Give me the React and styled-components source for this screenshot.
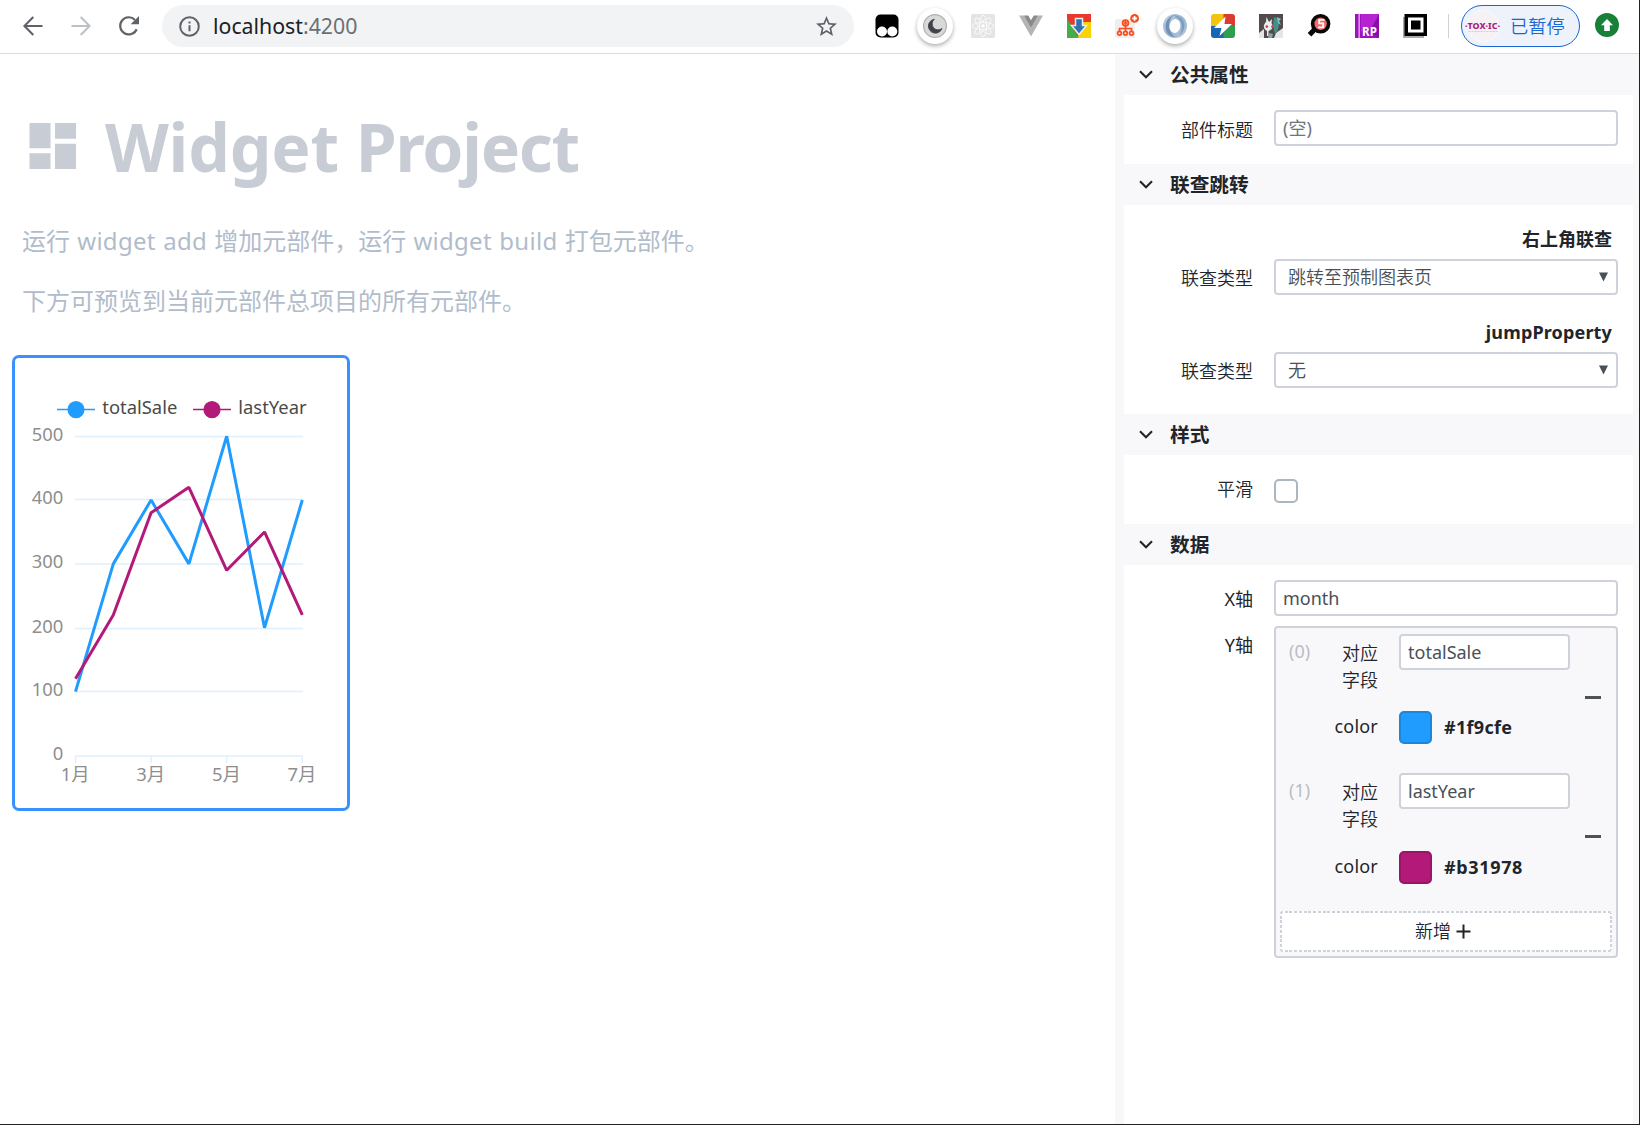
import React from "react";
import styled, { createGlobalStyle } from "styled-components";

const GlobalStyle = createGlobalStyle`
  * { box-sizing: border-box; }
  html, body { margin: 0; padding: 0; background: #fff; }
  body {
    font-family: "Noto Sans", "Noto Sans CJK SC", sans-serif;
    font-size: 18px;
    line-height: 27px;
    color: #212529;
    overflow: hidden;
  }
`;

const Screen = styled.div`
  width: 1640px;
  height: 1125px;
  display: flex;
  flex-direction: column;
  border-right: 1px solid #202227;
  border-bottom: 1px solid #202227;
  overflow: hidden;
`;

/* ---------- browser bar ---------- */

const Toolbar = styled.header`
  flex: none;
  height: 54px;
  padding: 5px 0 6px 9px;
  display: flex;
  border-bottom: 1px solid #dadce0;
`;

const NavButton = styled.div`
  width: 48px;
  height: 41px;
  display: flex;
  align-items: center;
  justify-content: center;
  color: ${(p) => (p.$muted ? "#bdc1c6" : "#5f6368")};
`;

const AddressBar = styled.div`
  width: 692px;
  height: 42px;
  margin-left: 9px;
  padding: 0 16px 0 17px;
  border-radius: 21px;
  background: #f1f3f4;
  display: flex;
  align-items: center;
`;

const Url = styled.span`
  flex: 1;
  margin-left: 13px;
  padding-bottom: 2px;
  font-size: 21.3px;
  color: #202124;
`;

const Port = styled.span`
  color: #6b6f74;
`;

const Extensions = styled.div`
  display: flex;
  margin-left: 9px;
`;

const ExtSlot = styled.div`
  width: 48px;
  height: 42px;
  display: flex;
  align-items: center;
  justify-content: center;
`;

const RoundBadge = styled.div`
  width: 36px;
  height: 36px;
  border-radius: 50%;
  background: #fff;
  box-shadow: 0 2px 4px rgba(0, 0, 0, 0.32);
  display: flex;
  align-items: center;
  justify-content: center;
`;

const BarDivider = styled.div`
  width: 1px;
  height: 24px;
  margin: 9px 12px 0 9px;
  background: #cfd1d5;
`;

const ProfilePill = styled.div`
  width: 119px;
  height: 42px;
  padding: 0 3px;
  border: 1.5px solid #1967d2;
  border-radius: 21px;
  background: #edf2fb;
  color: #1967d2;
  display: flex;
  align-items: center;
`;

const ProfileState = styled.span`
  margin-left: 9px;
  padding-bottom: 1px;
  font-family: "Noto Sans CJK SC", sans-serif;
  font-weight: 350;
  font-size: 18.2px;
  white-space: nowrap;
`;

const UpdateSlot = styled.div`
  margin: 8px 0 0 15px;
  height: 24px;
  line-height: 0;
`;

/* ---------- page ---------- */

const Page = styled.div`
  flex: 1;
  min-height: 0;
  display: flex;
`;

const Main = styled.main`
  width: 1115px;
  padding: 53px 0 0 12px;
`;

const Title = styled.h1`
  height: 78px;
  margin: 0;
  padding-left: 17px;
  display: flex;
  align-items: center;
  font-size: 66px;
  line-height: 78px;
  font-weight: 700;
  color: #c8ccd4;
  white-space: pre;

  svg { flex: none; margin-right: 29px; }
`;

const TitleWord = styled.span`
  letter-spacing: ${(p) => p.$tracking}px;
`;

const Intro = styled.p`
  margin: 0;
  padding: ${(p) => p.$top}px 0 0 10px;
  height: ${(p) => p.$height}px;
  font-size: 24px;
  line-height: 36px;
  word-spacing: 1px;
  color: #b1bccb;
  white-space: nowrap;
`;

const Command = styled.span`
  letter-spacing: 0.27px;
`;

const WidgetCard = styled.section`
  width: 338px;
  height: 456px;
  border: 3px solid #3a90ff;
  border-radius: 7px;
  svg { display: block; }
`;

/* ---------- property panel ---------- */

const Panel = styled.aside`
  flex: 1;
  padding: 0 6px 0 9px;
  background: #f8f8fb;
  display: flex;
  flex-direction: column;
`;

const SectionHead = styled.div`
  flex: none;
  height: 41px;
  padding-left: 15px;
  display: flex;
  align-items: center;
  gap: 17px;
  font-size: 19.7px;
  font-weight: 700;
`;

const SectionBody = styled.div`
  background: #fff;
  padding: ${(p) => p.$top}px 15px 0 0;
  ${(p) => (p.$height ? `height: ${p.$height}px; flex: none;` : "flex: 1;")}
`;

const Row = styled.div`
  display: flex;
  align-items: flex-start;
  margin-bottom: ${(p) => p.$gap || 0}px;
`;

const Label = styled.label`
  width: 129px;
  margin-right: 21px;
  padding-top: ${(p) => p.$drop ?? 6}px;
  text-align: right;
  font-weight: ${(p) => p.$weight || 350};
`;

const SubTitle = styled.div`
  height: ${(p) => p.$height}px;
  padding-right: 6px;
  text-align: right;
  font-weight: 700;
  letter-spacing: ${(p) => p.$tracking || 0}px;
`;

const Input = styled.div`
  flex: 1;
  height: 36px;
  padding: 0 7px;
  line-height: 33px;
  border: 2px solid #ced2da;
  border-radius: 4px;
  background: #fff;
  color: ${(p) => (p.$placeholder ? "#6c757d" : "#495057")};
`;

const Select = styled(Input)`
  padding: 0 8px 0 12px;
  display: flex;
  align-items: center;
  justify-content: space-between;
  font-weight: 350;
`;

const CheckboxSlot = styled.div`
  padding-top: 3px;
`;

const Checkbox = styled.div`
  width: 24px;
  height: 24px;
  border: 2px solid #adb5bd;
  border-radius: 5px;
  background: #fff;
`;

const ListBox = styled.div`
  flex: 1;
  height: 332px;
  padding: 0 4px;
  border: 2px solid #ced2da;
  border-radius: 4px;
  background: #f8f8fb;
`;

const Item = styled.div`
  height: 139.4px;
  display: flex;
  padding: 6px 0 0 9px;
`;

const ItemIndex = styled.span`
  width: 45px;
  padding-top: 4px;
  color: #b9bdc3;
`;

const ItemFields = styled.div`
  width: 236px;
`;

const ItemLabel = styled.div`
  width: 44px;
  margin-right: 21px;
  padding-top: ${(p) => p.$drop}px;
  text-align: right;
  line-height: 27px;
  letter-spacing: ${(p) => p.$tracking || 0}px;
  font-weight: ${(p) => p.$weight};
`;

const FieldRow = styled.div`
  display: flex;
  height: 77.3px;
`;

const Swatch = styled.div`
  width: 33px;
  height: 33px;
  margin-right: 12px;
  border: 2px solid ${(p) => p.$edge};
  border-radius: 5px;
  background: ${(p) => p.$color};
`;

const Hex = styled.strong`
  line-height: 33px;
  letter-spacing: ${(p) => p.$tracking}px;
`;

const RemoveIcon = styled.div`
  width: 16px;
  height: 3px;
  margin: 62px 0 0 15px;
  background: #4d5257;
`;

const AddButton = styled.div`
  height: 41px;
  margin-top: 4px;
  padding: 1px 6px 0 0;
  display: flex;
  align-items: center;
  justify-content: center;
  gap: 5px;
  border-radius: 3px;
  background-color: #fff;
  background-image:
    repeating-linear-gradient(90deg, #ced2da 0 3px, #fff 3px 4.75px),
    repeating-linear-gradient(90deg, #ced2da 0 3px, #fff 3px 4.75px),
    repeating-linear-gradient(180deg, #ced2da 0 3px, #fff 3px 4.75px),
    repeating-linear-gradient(180deg, #ced2da 0 3px, #fff 3px 4.75px);
  background-repeat: no-repeat;
  background-size: 100% 2px, 100% 2px, 2px 100%, 2px 100%;
  background-position: 0 0, 0 100%, 0 0, 100% 0;
  font-weight: 350;
`;

/* ---------- icons ---------- */

const BackIcon = () => (
  <svg width="20" height="20" viewBox="0 0 20 20" fill="none" stroke="currentColor" strokeWidth="2.1">
    <path d="M19.5 10H1.8M10.3 1 1.4 10l8.9 9" />
  </svg>
);

const ForwardIcon = () => (
  <svg width="20" height="20" viewBox="0 0 20 20" fill="none" stroke="currentColor" strokeWidth="2.1">
    <path d="M.5 10h17.7M9.7 1l8.9 9-8.9 9" />
  </svg>
);

const ReloadIcon = () => (
  <svg width="22" height="22" viewBox="0 0 22 22">
    <path d="M18.7 14.2A8.6 8.6 0 1 1 17 4.9" fill="none" stroke="currentColor" strokeWidth="2.2" />
    <path d="M21 1v8.3h-8.3z" fill="currentColor" />
  </svg>
);

const InfoIcon = () => (
  <svg width="21" height="21" viewBox="0 0 21 21">
    <circle cx="10.5" cy="10.5" r="9.3" fill="none" stroke="#5f6368" strokeWidth="2" />
    <path d="M9.5 9.3h2v6h-2zM9.5 5.5h2v2h-2z" fill="#5f6368" />
  </svg>
);

const StarIcon = () => (
  <svg width="23" height="23" viewBox="1 1 22 22" fill="#5f6368">
    <path d="M22 9.24l-7.19-.62L12 2 9.19 8.63 2 9.24l5.46 4.73L5.82 21 12 17.27 18.18 21l-1.63-7.03L22 9.24zM12 15.4l-3.76 2.27 1-4.28-3.32-2.88 4.38-.38L12 6.1l1.71 4.04 4.38.38-3.32 2.88 1 4.28L12 15.4z" />
  </svg>
);

const Ext = ({ children }) => (
  <svg width="24" height="24" viewBox="0 0 24 24">{children}</svg>
);

const MonkeyIcon = () => (
  <Ext>
    <rect x=".5" y=".5" width="23" height="23" rx="5" fill="#000" />
    <circle cx="7" cy="17.5" r="5" fill="#fff" />
    <circle cx="17.3" cy="17.5" r="5" fill="#fff" />
  </Ext>
);

const MoonIcon = () => (
  <Ext>
    <circle cx="12" cy="12" r="11.4" fill="#d9d9d9" stroke="#b0b0b0" strokeWidth="1.2" />
    <path d="M11.4 5.2a7 7 0 1 0 7.6 9.3 6 6 0 0 1-7.6-9.3z" fill="#3f4247" stroke="#3f4247" strokeWidth=".8" />
  </Ext>
);

const ReactIcon = () => (
  <Ext>
    <rect width="24" height="24" rx="1.5" fill="#e4e4e4" />
    <g fill="none" stroke="#fafafa" strokeWidth=".9">
      {[0, 45, 90, 135].map((a) => (
        <ellipse key={a} cx="12" cy="12" rx="10.8" ry="3.6" transform={`rotate(${a} 12 12)`} />
      ))}
    </g>
    <circle cx="12" cy="12" r="1.8" fill="#fff" />
  </Ext>
);

const VueIcon = () => (
  <Ext>
    <path d="M0 1.5h4.8L12 14l7.2-12.5H24L12 22.5z" fill="#b4b4b4" />
    <path d="M4.8 1.5h4.5L12 6.2l2.7-4.7h4.5L12 14z" fill="#8b8b8b" />
  </Ext>
);

const DownloadIcon = () => (
  <Ext>
    <rect width="24" height="24" fill="#e8392c" />
    <path d="M0 4v20h12z" fill="#43ad48" />
    <path d="M24 8H14L11 24h13z" fill="#fbd305" />
    <path d="M0 0h24v8H14L3 9z" fill="#e8392c" />
    <path d="M8.5 4.5h7v7h4L12 20.5 4.5 11.5h4z" fill="#2f72b3" stroke="#e8eef2" strokeWidth="1.5" />
  </Ext>
);

const TreeIcon = () => (
  <Ext>
    <rect y="5" width="20" height="19" rx="2" fill="#eee" />
    <g fill="none" stroke="#fc4c1e" strokeWidth="1.7">
      <circle cx="10.5" cy="9" r="2.9" />
      <path d="M10.5 6.5v11M4.5 17.5V14.5h12v3M8.8 9h3.4" />
      <circle cx="4.5" cy="19.3" r="1.9" />
      <circle cx="10.5" cy="19.3" r="1.9" />
      <circle cx="16.5" cy="19.3" r="1.9" />
    </g>
    <circle cx="19.6" cy="4.4" r="4.4" fill="#fc4c1e" />
    <path d="M19.6 2v4.8M17.2 4.4H22" stroke="#fff" strokeWidth="1.7" />
  </Ext>
);

const SwirlIcon = () => (
  <Ext>
    <defs>
      <linearGradient id="swirlBase" x1="0" y1="0" x2="1" y2="1">
        <stop offset="0" stopColor="#c3d3e4" />
        <stop offset=".5" stopColor="#9ab4cf" />
        <stop offset="1" stopColor="#b9cbde" />
      </linearGradient>
    </defs>
    <circle cx="12" cy="12" r="12" fill="url(#swirlBase)" />
    <path d="M10 1.500C4 4 1 10 3.500 17c1.500 3.500 5 6 8.500 6C7 19 5 14 6.500 8 7 5 8.500 3 10 1.500z" fill="#6d91b8" />
    <path d="M9 1.500c5-1 10 2 12 7 1.500 5-1 10-5 13 3-4 3.500-9 2-13.500C16.500 4.500 13 2 9 1.500z" fill="#7c9dc0" />
    <ellipse cx="12" cy="12" rx="5.400" ry="7" fill="#fff" transform="rotate(12 12 12)" />
  </Ext>
);

const BoltIcon = () => (
  <Ext>
    <defs>
      <clipPath id="boltClip"><rect width="24" height="24" rx="3" /></clipPath>
    </defs>
    <g clipPath="url(#boltClip)">
      <path d="M0 0h13v12H0z" fill="#f2c30f" />
      <path d="M12.500 0H24v12H12.500z" fill="#dc3b30" />
      <path d="M12 12h12v12H12z" fill="#2f9e50" />
      <path d="M0 12h12.500v12H0z" fill="#1767b5" />
    </g>
    <path d="M14.500 2.500 3 14h7.500L8.500 22 21 10h-7.500z" fill="#fff" />
  </Ext>
);

const CreatureIcon = () => (
  <Ext>
    <rect width="24" height="24" fill="#544a4b" />
    <path d="M0 19 5 15v9H0zM17 19l7-5v10H15z" fill="#e3e6e8" />
    <path d="M15 3c4 1 6 4 5 8s-1 6-4 9l-2-8z" fill="#448f8c" />
    <path d="M18 3l4 2-2 2 2 4-3-2z" fill="#8cc3bd" />
    <path d="M7 8 7.5 3l2.500 5 3-3-.5 4c2 3 1 7-3 8v5H8v-5c-4-2-4-6-1-9z" fill="#e9eef0" />
    <circle cx="7.8" cy="12.6" r="1.3" fill="#cf3d43" />
    <circle cx="13.2" cy="12.6" r="1.2" fill="#cf3d43" />
    <path d="M10 19l4 1-1 4H9z" fill="#79aaa8" />
  </Ext>
);

const SearchIcon = () => (
  <Ext>
    <path d="M9 14 2.5 20.8" stroke="#080808" strokeWidth="5" />
    <circle cx="13.6" cy="9.8" r="8" fill="#f26b6b" stroke="#080808" strokeWidth="3.6" />
    <path d="M17.5 5.8h-5.3v3.5h4v4h-5" fill="none" stroke="#fff" strokeWidth="1.8" />
  </Ext>
);

const AxureIcon = () => (
  <Ext>
    <rect width="24" height="24" fill="#a012c0" />
    <path d="M6 0h18v9L6 18z" fill="#b524d0" />
    <path d="M24 0v24l-9-7z" fill="#8a0daa" />
    <rect x="3.5" width="1.3" height="24" fill="#e7b6f0" />
    <text x="7" y="21.8" fontFamily="Noto Sans, sans-serif" fontWeight="700" fontSize="11.5" fill="#fff" textLength="15">RP</text>
  </Ext>
);

const SquareIcon = () => (
  <Ext>
    <path d="M0 3h21v21H0z" fill="#aaa" />
    <rect x="1.5" width="22.5" height="22" fill="#000" />
    <rect x="5" y="3.5" width="15.5" height="15" fill="#fff" />
    <rect x="8" y="6.5" width="9.5" height="9" fill="#000" />
  </Ext>
);

const AvatarIcon = () => (
  <svg width="36" height="34" viewBox="0 0 36 34">
    <circle cx="18" cy="17" r="15.5" fill="#f5f1f5" stroke="#fff" strokeDasharray="3 1.5" />
    <text x="0" y="19.5" fontFamily="Noto Sans, sans-serif" fontWeight="800" fontSize="8.5" fill="#a5237f" textLength="35" lengthAdjust="spacingAndGlyphs">·TOX·IC·</text>
    <path d="M3.5 22.5h29" stroke="#d6cad6" strokeWidth="1.2" strokeDasharray="2 1" />
  </svg>
);

const UpdateIcon = () => (
  <svg width="24" height="24" viewBox="0 0 24 24">
    <circle cx="12" cy="12" r="12" fill="#188038" />
    <path d="M12 6l6 6.3h-3.2V18H9.2v-5.7H6z" fill="#fff" />
  </svg>
);

const BlocksIcon = () => (
  <svg width="47" height="46" viewBox="0 0 47 46" fill="#c8ccd4">
    <path d="M.5 0h21v25.300H.5zM.5 30.300h21V46H.5zM26 0h21v15.700H26zM26 20.700h21V46H26z" />
  </svg>
);

const ChevronIcon = () => (
  <svg width="14" height="9" viewBox="0 0 14 9" fill="none" stroke="#212529" strokeWidth="2.1">
    <path d="M1 1.2l6 6 6-6" />
  </svg>
);

const ArrowIcon = () => (
  <svg width="9" height="10" viewBox="0 0 9 10" fill="#495057">
    <path d="M0 .5h9L4.5 9.5z" />
  </svg>
);

const PlusIcon = () => (
  <svg width="15" height="15" viewBox="0 0 15 15" fill="none" stroke="#212529" strokeWidth="2">
    <path d="M7.500 .5v14M.5 7.500h14" />
  </svg>
);

/* ---------- chart ---------- */

const SERIES = [
  { name: "totalSale", color: "#1f9cfe", x: 57, values: [100, 300, 400, 300, 500, 200, 400] },
  { name: "lastYear", color: "#b31978", x: 193, values: [120, 220, 380, 420, 290, 350, 220] },
];
const GRID = [[500, 436.5], [400, 499.5], [300, 564], [200, 628.5], [100, 691.5], [0, 756]];
const MONTHS = ["1月", "3月", "5月", "7月"];

const px = (i) => 75.5 + i * 37.8;
const py = (v) => 755.4 - v * 0.6384;

const AxisText = styled.text`
  font-size: 18.4px;
  fill: #8e8e8e;
`;

const LegendText = styled.text`
  font-size: 18.4px;
  fill: #4a4a4a;
`;

const LineChart = () => (
  <svg width="332" height="450" viewBox="15 358 332 450">
    {SERIES.map((s) => (
      <g key={s.name}>
        <path d={`M${s.x} 409.6h38`} stroke={s.color} strokeWidth="1.5" />
        <circle cx={s.x + 19} cy="409.6" r="8.6" fill={s.color} />
        <LegendText x={s.x + 45.3} y="414">{s.name}</LegendText>
      </g>
    ))}
    {GRID.map(([v, y]) => (
      <g key={v}>
        <path d={`M75 ${y}H303`} stroke="#dfeffd" strokeWidth="1.5" />
        <AxisText x="63.2" y={y + 4.3} textAnchor="end">{v}</AxisText>
      </g>
    ))}
    {MONTHS.map((m, i) => (
      <g key={m}>
        <path d={`M${px(i * 2)} 756v7`} stroke="#dfeffd" strokeWidth="1.5" />
        <AxisText x={px(i * 2) - 0.3} y="781" textAnchor="middle">{m}</AxisText>
      </g>
    ))}
    {SERIES.map((s) => (
      <polyline
        key={s.name}
        points={s.values.map((v, i) => `${px(i)},${py(v)}`).join(" ")}
        fill="none"
        stroke={s.color}
        strokeWidth="3"
        strokeLinejoin="bevel"
      />
    ))}
  </svg>
);

/* ---------- composition ---------- */

const Section = ({ title, height, top, children }) => (
  <>
    <SectionHead><ChevronIcon />{title}</SectionHead>
    <SectionBody $height={height} $top={top}>{children}</SectionBody>
  </>
);

const SeriesItem = ({ index, name, color, edge, tracking }) => (
  <Item>
    <ItemIndex>({index})</ItemIndex>
    <ItemFields>
      <FieldRow>
        <ItemLabel $drop={6} $weight={350}>对应字段</ItemLabel>
        <Input>{name}</Input>
      </FieldRow>
      <FieldRow>
        <ItemLabel $drop={2} $tracking={0.2} $weight={400}>color</ItemLabel>
        <Swatch $color={color} $edge={edge} />
        <Hex $tracking={tracking}>{color}</Hex>
      </FieldRow>
    </ItemFields>
    <RemoveIcon />
  </Item>
);

export default function App() {
  return (
    <Screen>
      <GlobalStyle />
      <Toolbar>
        <NavButton><BackIcon /></NavButton>
        <NavButton $muted><ForwardIcon /></NavButton>
        <NavButton><ReloadIcon /></NavButton>
        <AddressBar>
          <InfoIcon />
          <Url>localhost<Port>:4200</Port></Url>
          <StarIcon />
        </AddressBar>
        <Extensions>
          <ExtSlot><MonkeyIcon /></ExtSlot>
          <ExtSlot><RoundBadge><MoonIcon /></RoundBadge></ExtSlot>
          <ExtSlot><ReactIcon /></ExtSlot>
          <ExtSlot><VueIcon /></ExtSlot>
          <ExtSlot><DownloadIcon /></ExtSlot>
          <ExtSlot><TreeIcon /></ExtSlot>
          <ExtSlot><RoundBadge><SwirlIcon /></RoundBadge></ExtSlot>
          <ExtSlot><BoltIcon /></ExtSlot>
          <ExtSlot><CreatureIcon /></ExtSlot>
          <ExtSlot><SearchIcon /></ExtSlot>
          <ExtSlot><AxureIcon /></ExtSlot>
          <ExtSlot><SquareIcon /></ExtSlot>
        </Extensions>
        <BarDivider />
        <ProfilePill>
          <AvatarIcon />
          <ProfileState>已暂停</ProfileState>
        </ProfilePill>
        <UpdateSlot><UpdateIcon /></UpdateSlot>
      </Toolbar>
      <Page>
        <Main>
          <Title>
            <BlocksIcon />
            <TitleWord $tracking={-0.2}>{"Widget "}</TitleWord>
            <TitleWord $tracking={-1.3}>Project</TitleWord>
          </Title>
          <Intro $top={38} $height={98}>
            运行 <Command>widget add</Command> 增加元部件，运行 <Command>widget build</Command> 打包元部件。
          </Intro>
          <Intro $top={0} $height={72}>下方可预览到当前元部件总项目的所有元部件。</Intro>
          <WidgetCard><LineChart /></WidgetCard>
        </Main>
        <Panel>
          <Section title="公共属性" height={69} top={15}>
            <Row>
              <Label $drop={7}>部件标题</Label>
              <Input $placeholder>(空)</Input>
            </Row>
          </Section>
          <Section title="联查跳转" height={209} top={21}>
            <SubTitle $height={33}>右上角联查</SubTitle>
            <Row $gap={24}>
              <Label>联查类型</Label>
              <Select>跳转至预制图表页<ArrowIcon /></Select>
            </Row>
            <SubTitle $height={33} $tracking={0.15}>jumpProperty</SubTitle>
            <Row>
              <Label>联查类型</Label>
              <Select>无<ArrowIcon /></Select>
            </Row>
          </Section>
          <Section title="样式" height={69} top={21}>
            <Row>
              <Label $drop={0}>平滑</Label>
              <CheckboxSlot><Checkbox /></CheckboxSlot>
            </Row>
          </Section>
          <Section title="数据" top={15}>
            <Row $gap={10}>
              <Label $weight={400}>X轴</Label>
              <Input>month</Input>
            </Row>
            <Row>
              <Label $weight={400}>Y轴</Label>
              <ListBox>
                <SeriesItem index={0} name="totalSale" color="#1f9cfe" edge="#1b87dc" tracking={0.3} />
                <SeriesItem index={1} name="lastYear" color="#b31978" edge="#981566" tracking={0.65} />
                <AddButton>新增<PlusIcon /></AddButton>
              </ListBox>
            </Row>
          </Section>
        </Panel>
      </Page>
    </Screen>
  );
}
